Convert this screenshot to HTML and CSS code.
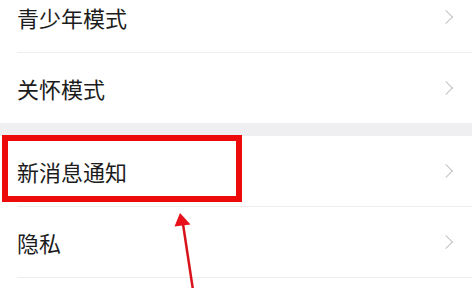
FILE: index.html
```html
<!DOCTYPE html>
<html lang="zh-CN">
<head>
    <meta charset="UTF-8">
    <title>设置</title>
    <link rel="stylesheet" href="styles.css">
</head>
<body>

<div class="page">
    <ul class="group first">
        <li class="row"><div class="cell"><span class="label">青少年模式</span><span class="chev"></span></div></li>
        <li class="row last"><div class="cell"><span class="label">关怀模式</span><span class="chev"></span></div></li>
    </ul>

    <div class="gap"></div>

    <ul class="group">
        <li class="row"><div class="cell"><span class="label">新消息通知</span><span class="chev"></span></div></li>
        <li class="row"><div class="cell"><span class="label">隐私</span><span class="chev"></span></div></li>
    </ul>

    <!-- 标注: 红框 + 箭头 -->
    <svg class="mark" width="472" height="288" viewBox="0 0 472 288">
        <rect x="5" y="138" width="234" height="61" fill="none" stroke="#ec0a0a" stroke-width="6"/>
        <line x1="193" y1="290" x2="183" y2="224" stroke="#d8121a" stroke-width="2.5"/>
        <polygon points="180,213 174.5,226.5 190.5,224.5" fill="#e8101a"/>
    </svg>
</div>

</body>
</html>
```

FILE: styles.css
```css
body {
    margin: 0;
    background: #fff;
    font-family: "Noto Sans CJK SC", "Noto Sans", sans-serif;
    overflow: hidden;
}

.page {
    position: relative;
    width: 472px;
    height: 288px;
    overflow: hidden;
}

.group {
    list-style: none;
    margin: 0;
    padding: 0;
    background: #fff;
}

.group.first {
    margin-top: -18px;
}

.gap {
    height: 13px;
    background: #efeff1;
}

.row {
    padding-left: 17px;
}

.cell {
    display: flex;
    align-items: center;
    justify-content: space-between;
    height: 70px;
    padding-right: 18px;
    border-bottom: 1px solid #ededed;
}

.row.last .cell {
    border-bottom: none;
}

.label {
    font-size: 22px;
    color: #1c1c1c;
}

/* 右箭头 */
.chev {
    width: 9px;
    height: 9px;
    border-top: 1.6px solid #c2c2c2;
    border-right: 1.6px solid #c2c2c2;
    transform: rotate(45deg);
    margin-right: 3px;
}

.mark {
    position: absolute;
    left: 0;
    top: 0;
}
```
